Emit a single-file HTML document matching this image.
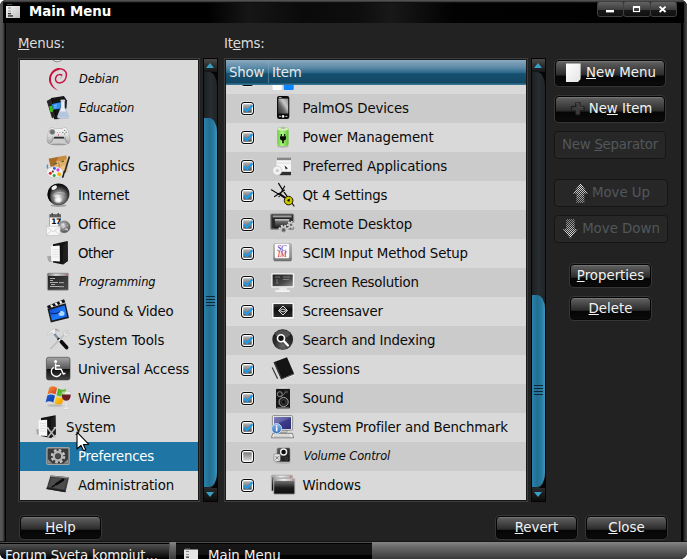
<!DOCTYPE html>
<html><head><meta charset="utf-8"><title>Main Menu</title>
<style>
html,body{margin:0;padding:0;background:#fff;}
body{width:687px;height:559px;position:relative;overflow:hidden;font-family:"DejaVu Sans","Liberation Sans",sans-serif;font-size:13.33px;letter-spacing:-0.21px;color:#e6e6e6;}
#win{position:absolute;left:0;top:0;width:687px;height:559px;background:#000;overflow:hidden;border-radius:6px 6px 7px 6px;}
#edge{position:absolute;left:0;top:0;width:687px;height:543px;box-sizing:border-box;border-radius:6px 6px 0 0;background:linear-gradient(90deg,#585858 0,#505050 2.5px,#303030 4px,#000 5.5px,#000 682.5px,#2c2c2c 684.5px,#484848 687px);}
#tbar{position:absolute;left:3px;top:0;width:681px;height:23px;background:linear-gradient(#565656 0,#4a4a4a 1.2px,#1a1a1a 2.2px,#000 3px,#000 100%);}
#tglow{position:absolute;left:3px;top:3px;width:681px;height:20px;background:linear-gradient(90deg,#000 0,#000 30%,#161616 36%,#0a0a0a 44%,#0d0d0d 52%,#181818 57%,#020202 66%,#000 100%);}
#body{position:absolute;left:6px;top:23px;width:675px;height:518px;background:#222;}
#title{position:absolute;left:29px;top:3px;font-weight:bold;font-size:13.33px;letter-spacing:0;color:#fff;line-height:18px;}
.wb{position:absolute;top:1px;height:16px;width:27px;box-sizing:border-box;border:1px solid #404040;border-radius:3px;background:linear-gradient(#626262 0,#3c3c3c 57%,#181818 60%,#101010 100%);}
.wb svg{position:absolute;left:-1px;top:0;}
.bi{display:inline-block;width:16px;height:20px;vertical-align:top;margin-right:4px;position:relative;}
.bi svg{position:absolute;left:0;top:0;overflow:visible;}
#cursor{position:absolute;left:74px;top:430px;}
.lbl{position:absolute;color:#dcdcdc;line-height:18px;}
.frame{position:absolute;background:#181818;box-sizing:border-box;border:1px solid #3c3c3c;}
.list{position:absolute;background:#d9d9d9;overflow:hidden;}
.row{position:absolute;left:0;width:100%;height:29px;line-height:29px;color:#0a0a0a;white-space:nowrap;}
.row.alt{background:#cbcbcb;}
.row.sel{background:#1f75a3;color:#fff;}
.row .tx{position:absolute;top:0;}
.row.sm .tx{font-size:11.45px;letter-spacing:-0.1px;font-style:oblique;margin-left:1px;}
.row .ic{position:absolute;top:2px;width:24px;height:24px;}
.row .ic svg{display:block;}
.cb{position:absolute;left:15px;top:8px;width:13px;height:13px;box-sizing:border-box;border:1px solid #0a0a0a;border-radius:3px;background:linear-gradient(#6c6c6c,#e4e4e4);box-shadow:inset 0 0 0 1.2px #fff,0 0 0 1px rgba(255,255,255,.35);}
.cb.on{background:linear-gradient(#c4c4c4,#444);}
.cb svg{position:absolute;left:-1px;top:-1px;}
#hdr{position:absolute;left:0;top:0;width:100%;height:25px;background:linear-gradient(#8aaabf 0%,#5d8aa6 30%,#2b6a8d 50%,#15506f 55%,#134865 90%,#3f7f9f 100%);color:#e8e8e8;line-height:26px;}
#hdr span{position:absolute;top:0;}
#hdr i{position:absolute;top:1px;width:1px;height:22px;background:rgba(140,180,205,.45);}
.btn{position:absolute;border-radius:4px;border:1px solid #050505;box-sizing:border-box;text-align:center;color:#f2f2f2;background:linear-gradient(#808080 0%,#5c5c5c 7%,#2a2a2a 59%,#050505 62%,#0b0b0b 100%);line-height:22px;white-space:nowrap;box-shadow:0 0 0 1px #363636;letter-spacing:0;}
.btn.big{line-height:23px;}
.btn.dis{background:#272727;border-color:#161616;color:#52575b;box-shadow:none;line-height:25px;}
u{text-decoration:underline;text-underline-offset:1px;}
.sb{position:absolute;width:15px;background:#050505;}
.sb .up,.sb .dn{position:absolute;left:1px;width:13px;height:13px;background:linear-gradient(#4a4a4a,#141414);}
.sb .up{top:1px}.sb .dn{bottom:1px;background:linear-gradient(#2a2a2a,#0c0c0c);}
.sb .up:after{content:"";position:absolute;left:2px;top:4px;border:4.5px solid transparent;border-top:0;border-bottom:5px solid #36a0c8;}
.sb .dn:after{content:"";position:absolute;left:2px;top:4px;border:4.5px solid transparent;border-bottom:0;border-top:5px solid #36a0c8;}
.sb .tr{position:absolute;left:1px;width:13px;top:14px;bottom:14px;border-radius:0 8px 8px 0/0 14px 14px 0;background:linear-gradient(90deg,#1b1f22,#272d31 50%,#1f2428);}
.sb .th{position:absolute;left:1px;width:13px;border-radius:0 8px 8px 0/0 14px 14px 0;background:linear-gradient(90deg,#2b82aa 0,#236e93 40%,#2a7ca2 75%,#3a98c0 100%);}
.sb .gr{position:absolute;left:3px;width:9px;height:10px;background:repeating-linear-gradient(#0d2736 0,#0d2736 1px,transparent 1px,transparent 3px);}
#panel{position:absolute;left:0;top:541px;width:687px;height:18px;background:linear-gradient(#151515 0,#151515 1px,#848484 1.2px,#6a6a6a 6px,#3a3a3a 18px);}
.tb{position:absolute;top:542px;height:18px;border-top:1px solid #4c4c4c;box-sizing:border-box;color:#f0f0f0;font-size:13.33px;letter-spacing:0;line-height:26px;white-space:nowrap;overflow:hidden;}
</style></head><body>
<div id="win">
<div id="edge"></div>
<div id="tbar"></div>
<div id="tglow"></div>
<div id="title">Main Menu</div>
<svg style="position:absolute;left:5px;top:3px" width="17" height="17" viewBox="0 0 17 17"><defs><linearGradient id="wi" x1="0" y1="0" x2="1" y2="1"><stop offset="0" stop-color="#f6f6f6"/><stop offset="1" stop-color="#bcbcbc"/></linearGradient></defs><rect x="2" y="1" width="5" height="1" fill="#4a4a4a"/><rect x="1" y="3" width="14" height="12" fill="url(#wi)"/><rect x="3" y="4.5" width="3" height="1" fill="#888"/><rect x="3" y="7.5" width="3" height="1" fill="#999"/><rect x="3" y="10" width="3" height="1.3" fill="#333"/><rect x="3" y="12.3" width="5" height="1.3" fill="#222"/></svg>
<div class="wb" style="left:597px;width:27px"><svg width="26" height="14"><rect x="9" y="8" width="8" height="2.4" fill="#fff"/></svg></div>
<div class="wb" style="left:623px;width:28px"><svg width="27" height="14"><rect x="10.5" y="5" width="6" height="4.5" fill="none" stroke="#fff" stroke-width="1.2"/><rect x="10" y="4" width="7" height="2" fill="#fff"/></svg></div>
<div class="wb" style="left:650px;width:27px"><svg width="26" height="14"><path d="M9.6 4.6 L15.6 10 M15.6 4.6 L9.6 10" stroke="#fff" stroke-width="1.9"/></svg></div>
<div id="body"></div>
<div class="lbl" style="left:18px;top:35px"><u>M</u>enus:</div>
<div class="lbl" style="left:224px;top:35px">It<u>e</u>ms:</div>
<div class="frame" style="left:18px;top:58px;width:182px;height:444px"></div>
<div class="frame" style="left:224px;top:58px;width:304px;height:444px"></div>

<div class="list" id="menus" style="left:20px;top:60px;width:178px;height:440px">
<div class="row" style="top:-24px"><span class="ic" style="left:14px"><svg width="26" height="26" viewBox="0 0 26 26" style="overflow:visible"><circle cx="23.3" cy="17.6" r="6.2" fill="#e4e4e4" stroke="#8c8c8c" stroke-width="1"/></svg></span><span class="tx" style="left:46px"></span></div>
<div class="row sm" style="top:5px"><span class="ic" style="left:26px"><svg width="26" height="26" viewBox="0 0 26 26" style="overflow:visible"><path d="M12.3 23.7 C7 21.6 2.6 17 3 12 C3.4 5.6 8.6 1.1 13 1.1 L13.5 2.9 C9.6 3 5.3 6.2 5 12 C4.7 16.4 8 20.8 12.3 23.7Z" fill="#c70f3d"/><path d="M11.5 2 C17 1 20.7 4.2 20.4 7.8 C20.2 11.3 18.4 15.6 13.8 16 C10.5 16 9.1 13.5 9.6 11.2 C10.1 8.8 11.6 7.7 13.2 7.6 C14.3 7.5 15.2 7.7 15.8 8" fill="none" stroke="#c70f3d" stroke-width="1.45" stroke-linecap="round"/><path d="M15.8 8 Q16 10.5 14 11.6" fill="none" stroke="#c70f3d" stroke-width=".7" opacity=".45"/></svg></span><span class="tx" style="left:58px">Debian</span></div>
<div class="row sm" style="top:34px"><span class="ic" style="left:26px"><svg width="26" height="26" viewBox="0 0 26 26" style="overflow:visible"><polygon points="5,2 17.9,0 21,4.5 20.5,12 14,23 8.2,23.3" fill="#151515"/><polygon points="0.7,5 4.6,2.8 9.6,21 6,22.3" fill="#262626"/><polygon points="4.6,2.8 5.6,2.4 10.6,20.6 9.6,21" fill="#0a0a0a"/>
<polygon points="3.1,10.4 6.2,9.6 7.2,15.4 4.4,16.2" fill="#3cc01a"/><polygon points="6,8 14.9,6.2 14.6,12.6 7,13.8" fill="#2c8ff2"/><path d="M8 9.6 l3 -.6 M8.3 11.4 l2.4 -.5" stroke="#9cd0ff" stroke-width=".8"/>
<path d="M15 4.6 L18.7 4.6 L18.7 11.2 L22.7 20.6 Q23 22.4 21 22.4 L13 22.4 Q11 22.4 11.4 20.6 L15 11.2 Z" fill="#e9eef5" stroke="#9aa6b8" stroke-width=".6"/><path d="M13.6 15.6 L20.6 15.6 L22.2 20.6 Q22.3 21.8 21 21.8 L13 21.8 Q11.8 21.8 12 20.6 Z" fill="#b4c6de"/><rect x="14.6" y="3.8" width="4.5" height="1.2" rx=".6" fill="#f4f6fa" stroke="#9aa6b8" stroke-width=".4"/></svg></span><span class="tx" style="left:58px;letter-spacing:-0.225px">Education</span></div>
<div class="row" style="top:63px"><span class="ic" style="left:26px"><svg width="26" height="26" viewBox="0 0 26 26" style="overflow:visible"><defs><linearGradient id="gp" x1="0" y1="0" x2="0" y2="1"><stop offset="0" stop-color="#f8f8f8"/><stop offset=".4" stop-color="#e6e6e6"/><stop offset="1" stop-color="#a4a4a4"/></linearGradient></defs><polygon points="7.4,13.5 18.6,13.5 20.4,18.8 4.6,18.8" fill="#b4b4b4" opacity=".3"/><ellipse cx="12.5" cy="19.3" rx="8.6" ry=".9" fill="#7c7c7c" opacity=".7"/>
<path d="M4.6 2.8 Q7 1.8 8.6 3.6 L16.4 3.6 Q18 1.8 20.4 2.8 Q23.4 6.5 24 14 Q24.2 18.8 21.8 18.7 Q20 18.4 18.6 13.5 L7.4 13.5 Q5.6 18.4 3.4 18.7 Q0.9 18.8 1.1 14 Q1.6 6.5 4.6 2.8 Z" fill="url(#gp)" stroke="#a0a0a0" stroke-width=".5"/>
<path d="M7.5 13.5 L18.5 13.5 L17.6 11.7 L8.4 11.7 Z" fill="#2a2a2a"/><path d="M7.4 13.5 Q5.8 18 3.8 18.5 Q6.5 15 6.6 11Z M18.6 13.5 Q20.2 18 22.2 18.5 Q19.5 15 19.4 11Z" fill="#8c8c8c" opacity=".6"/>
<circle cx="6.3" cy="6.9" r="2.7" fill="#7c7c7c" stroke="#9c9c9c" stroke-width=".5"/><circle cx="6.3" cy="6.9" r="1.5" fill="#686868"/><ellipse cx="12.4" cy="10" rx=".5" ry=".8" fill="#b82828"/><circle cx="18.6" cy="5.4" r=".7" fill="#888"/><circle cx="20.3" cy="7.2" r=".7" fill="#888"/><circle cx="16.8" cy="7.4" r=".7" fill="#777"/><circle cx="18.6" cy="9" r=".7" fill="#888"/><circle cx="11.4" cy="7.4" r=".5" fill="#999"/><circle cx="13.6" cy="7.4" r=".5" fill="#999"/></svg></span><span class="tx" style="left:58px">Games</span></div>
<div class="row" style="top:92px"><span class="ic" style="left:26px"><svg width="26" height="26" viewBox="0 0 26 26" style="overflow:visible"><polygon points="2.7,4.7 20.3,1.4 21.9,17.8 9,21" fill="#e2b06c"/><polygon points="2.7,4.7 13,2.8 10,8 7.5,13 4.5,12.5" fill="#a86c28"/><polygon points="13,2.8 20.3,1.4 20.6,5 15,7.5 11,6.5" fill="#c88c40"/><polygon points="15.5,12 21.6,11.5 21.9,17.8 14,19.5" fill="#edc48c"/>
<ellipse cx="9.4" cy="9.6" rx="1.8" ry="1" fill="#5a6a28" transform="rotate(-15 9.4 9.6)"/><ellipse cx="16.8" cy="7.4" rx="1.4" ry=".8" fill="#5a6a28" transform="rotate(-15 16.8 7.4)"/><path d="M12.5 8.5 Q14 12 13 14.5" stroke="#b07838" stroke-width=".8" fill="none"/><ellipse cx="14.6" cy="16.4" rx="1.4" ry=".6" fill="#8a3a20"/>
<path d="M1.6 10.5 Q0.6 13 2 14.5" stroke="#4a8ae0" stroke-width="1.4" fill="none"/>
<ellipse cx="8.7" cy="18.2" rx="8.3" ry="5.6" fill="#f1f1f1" stroke="#c4c4c4" stroke-width=".6"/>
<circle cx="4.3" cy="19.2" r="1.5" fill="#e02020"/><circle cx="8.2" cy="21.4" r="1.5" fill="#20b020"/><circle cx="13.2" cy="20.2" r="1.9" fill="#f0b010"/><circle cx="12" cy="15.9" r="1.6" fill="#d040e0"/><circle cx="8.4" cy="14.4" r="1.4" fill="#3050e0"/><circle cx="6.8" cy="17.4" r="1" fill="#3a2a20"/>
<line x1="23.4" y1="2.6" x2="18.6" y2="18.6" stroke="#2a2a2a" stroke-width="1.7"/><path d="M19.2 17.5 L17.6 23.2 Q16.4 24.4 15.8 23.2 Q17 21 17.6 17Z" fill="#151515"/></svg></span><span class="tx" style="left:58px;letter-spacing:-0.324px">Graphics</span></div>
<div class="row" style="top:121px"><span class="ic" style="left:26px"><svg width="26" height="26" viewBox="0 0 26 26" style="overflow:visible"><defs><radialGradient id="gl" cx=".52" cy=".62" r=".6"><stop offset="0" stop-color="#dcdcdc"/><stop offset=".4" stop-color="#8c8c8c"/><stop offset=".75" stop-color="#2e2e2e"/><stop offset="1" stop-color="#030303"/></radialGradient><radialGradient id="gl2"><stop offset="0" stop-color="#fff" stop-opacity="1"/><stop offset=".5" stop-color="#fff" stop-opacity=".8"/><stop offset="1" stop-color="#fff" stop-opacity="0"/></radialGradient></defs><ellipse cx="12.5" cy="22.6" rx="8" ry="1.4" fill="#8a8a8a" opacity=".7"/><circle cx="12.5" cy="11.3" r="10.9" fill="url(#gl)"/>
<path d="M2.2 8 A10.9 10.9 0 0 0 6 20 Q2.5 14 5.5 5 Q3 6.5 2.2 8Z" fill="#050505" opacity=".85"/>
<ellipse cx="8.2" cy="4.6" rx="3" ry="1.9" fill="#fff" opacity=".95" transform="rotate(-28 8.2 4.6)"/><ellipse cx="12.2" cy="17" rx="4.6" ry="3.6" fill="url(#gl2)"/><ellipse cx="11" cy="13" rx="4" ry="2" fill="url(#gl2)" opacity=".7"/><path d="M6.5 12.5 Q12 7.5 19 10.5" stroke="#e8e8e8" stroke-width=".8" fill="none" opacity=".5"/></svg></span><span class="tx" style="left:58px">Internet</span></div>
<div class="row" style="top:150px"><span class="ic" style="left:26px"><svg width="26" height="26" viewBox="0 0 26 26" style="overflow:visible"><defs><radialGradient id="og" cx=".4" cy=".35" r=".7"><stop offset="0" stop-color="#c8c8c8"/><stop offset="1" stop-color="#4a4a4a"/></radialGradient></defs><rect x="3.7" y="2.4" width="11" height="13" fill="#f6f6f6" stroke="#8a8a8a" stroke-width=".6"/><rect x="3.7" y="2.4" width="11" height="3" fill="#4a4a4a"/><rect x="5.6" y="1" width="1.2" height="2.6" fill="#3a3a3a"/><rect x="11.6" y="1" width="1.2" height="2.6" fill="#3a3a3a"/><path d="M5 4h8.5" stroke="#aaa" stroke-width=".7" stroke-dasharray="1 .6"/>
<text x="5.2" y="12.2" font-family="DejaVu Sans" font-weight="bold" font-size="7.6" letter-spacing="-.5" fill="#0a0a0a">17</text>
<circle cx="18.2" cy="14.9" r="5.9" fill="url(#og)" stroke="#5a5a5a" stroke-width=".5"/><path d="M15 12 q2.6 -2 3.6 .6 q1.6 1.8 -.8 3.6 q-2.6 0 -2.8 -4.2z M19.6 16.6 q2.6 -1 2.6 1.6 q-1.6 1.8 -2.6 -1.6z" fill="#d4d4d4" opacity=".75"/><circle cx="17.4" cy="12.2" r=".5" fill="#fff"/><circle cx="19.4" cy="17.2" r=".5" fill="#fff"/><circle cx="21.6" cy="13.4" r=".4" fill="#fff"/>
<rect x="0.3" y="14.2" width="13.8" height="9.2" fill="#f7f7f7" stroke="#bdbdbd" stroke-width=".6"/><path d="M0.3 14.2 L7.2 19.8 L14.1 14.2 M0.3 23.4 L5.6 18.4 M14.1 23.4 L8.8 18.4" stroke="#c8c8c8" stroke-width=".7" fill="none"/></svg></span><span class="tx" style="left:58px">Office</span></div>
<div class="row" style="top:179px"><span class="ic" style="left:26px"><svg width="26" height="26" viewBox="0 0 26 26" style="overflow:visible"><polygon points="1,15.5 6,14.5 6,21 2.5,20.5" fill="#9a9a9a" opacity=".8"/><polygon points="7,3.2 21.6,0 21.8,20 17,23.4 7,21.5" fill="#121212"/><polygon points="17,4.5 21.6,0 21.8,20 17,23.4" fill="#1e1e1e"/>
<polygon points="5,5.2 13.7,4.6 13.9,20.5 5.2,20" fill="#f8f8f8"/><path d="M6.5 8.5h6M6.5 11h6M6.5 13.5h6M6.5 16h6" stroke="#dcdcdc" stroke-width=".8"/></svg></span><span class="tx" style="left:58px;letter-spacing:-0.510px">Other</span></div>
<div class="row sm" style="top:208px"><span class="ic" style="left:26px"><svg width="26" height="26" viewBox="0 0 26 26" style="overflow:visible"><defs><linearGradient id="tg" x1="0" y1="0" x2="1" y2="1"><stop offset="0" stop-color="#1e1e1e"/><stop offset="1" stop-color="#4a4a4a"/></linearGradient><linearGradient id="tt" x1="0" y1="0" x2="1" y2="0"><stop offset="0" stop-color="#777"/><stop offset=".4" stop-color="#ddd"/><stop offset="1" stop-color="#888"/></linearGradient></defs><rect x="1.3" y="3.2" width="21.2" height="17.1" rx="1" fill="url(#tg)" stroke="#a8a8a8" stroke-width="1"/><rect x="1.8" y="3.7" width="20.2" height="2.2" fill="url(#tt)"/><circle cx="20.3" cy="4.7" r=".6" fill="#e05050"/>
<path d="M4 8.5h5M4 10.5h3M4 12.5h8M5 14.5h4M4 16.5h9M13 12.7h5M13 16.7h5" stroke="#bdbdbd" stroke-width=".9"/></svg></span><span class="tx" style="left:58px">Programming</span></div>
<div class="row" style="top:237px"><span class="ic" style="left:26px"><svg width="26" height="26" viewBox="0 0 26 26" style="overflow:visible"><defs><linearGradient id="sv" x1="0" y1="0" x2="1" y2="1"><stop offset="0" stop-color="#0a3fc0"/><stop offset=".6" stop-color="#1e7cff"/><stop offset="1" stop-color="#0a50d0"/></linearGradient></defs><polygon points="1,7 18,0.3 19.4,3.3 2,9.8" fill="#111"/><path d="M4 6 l2 -0.8 l1.6 2.6 l-2 .8z M8.5 4.2 l2 -.8 l1.6 2.6 l-2 .8z M13 2.4 l2 -.8 l1.6 2.6 l-2 .8z" fill="#f4f4f4"/>
<polygon points="1.5,9.8 19.6,4.2 23,19 4.8,23.4" fill="#1a1a1a"/><polygon points="3.3,11 18.6,6.3 21.2,17.8 5.8,21.5" fill="url(#sv)"/><ellipse cx="15.5" cy="14.5" rx="3" ry="2.5" fill="#bfe4ff" opacity=".9"/><path d="M4.5 14 Q10 16 14 12.5" stroke="#082a80" stroke-width="1.2" fill="none"/></svg></span><span class="tx" style="left:58px">Sound &amp; Video</span></div>
<div class="row" style="top:266px"><span class="ic" style="left:26px"><svg width="26" height="26" viewBox="0 0 26 26" style="overflow:visible"><path d="M18.6 7.4 L5.6 20.8 Q4.4 21.8 4.2 20.6 L17.2 6.4Z" fill="#c6c6c6" stroke="#b0b0b0" stroke-width=".4"/><path d="M22.4 2.6 Q20 1.2 18.2 3.4 Q16.8 5.4 17.8 7.6 Q20.2 9 22.4 7.4 Q23.6 6 23 4.4 L20.8 6.2 L19.2 4.8 Z" fill="#e6e6e6" stroke="#b4b4b4" stroke-width=".5"/>
<path d="M1.2 6.2 Q3.6 2 8.4 0.6 Q11.6 0.4 13.6 3.2 Q11.2 2.2 9.6 3 L10 5.4 L8 7 L5.6 4.6 Q3.4 5.2 2.4 7.2Z" fill="#ececec" stroke="#b0b0b0" stroke-width=".5"/><path d="M8.6 1 Q11.6 0.6 13.6 3.2 Q11.4 2.2 9.8 2.8Z" fill="#9c9c9c"/>
<line x1="8.4" y1="6" x2="12.2" y2="10.6" stroke="#7c8c9a" stroke-width="2.2"/><line x1="11.9" y1="10.4" x2="12.9" y2="11.5" stroke="#151515" stroke-width="2.6"/><line x1="12.8" y1="11.4" x2="14.8" y2="13.2" stroke="#f4f4f4" stroke-width="1.4"/><line x1="15.4" y1="13.8" x2="20.6" y2="19.6" stroke="#0c0c0c" stroke-width="3.7" stroke-linecap="round"/></svg></span><span class="tx" style="left:58px;letter-spacing:-0.028px">System Tools</span></div>
<div class="row" style="top:295px"><span class="ic" style="left:26px"><svg width="26" height="26" viewBox="0 0 26 26" style="overflow:visible"><defs><linearGradient id="ua" x1="0" y1="0" x2="0" y2="1"><stop offset="0" stop-color="#a6a6a6"/><stop offset=".5" stop-color="#585858"/><stop offset=".52" stop-color="#0c0c0c"/><stop offset="1" stop-color="#444"/></linearGradient></defs><rect x="0.4" y="0.3" width="23.6" height="22.6" rx="2.2" fill="url(#ua)" stroke="#3a3a3a" stroke-width=".6"/>
<circle cx="9.6" cy="4.6" r="1.5" fill="#fff"/><path d="M9.6 6.5 L9.6 12.3 L15.2 12.3 L17.3 17 L19.4 16.2 M9.8 8.8 L14 8.8" fill="none" stroke="#fff" stroke-width="1.5" stroke-linejoin="round"/><path d="M7.7 10.2 A5 5 0 1 0 15 16.2" fill="none" stroke="#fff" stroke-width="1.3"/></svg></span><span class="tx" style="left:58px;letter-spacing:-0.057px">Universal Access</span></div>
<div class="row" style="top:324px"><span class="ic" style="left:26px"><svg width="26" height="26" viewBox="0 0 26 26" style="overflow:visible"><defs><linearGradient id="w1" x1="0" y1="0" x2="1" y2="1"><stop offset="0" stop-color="#f0a040"/><stop offset="1" stop-color="#d83010"/></linearGradient><linearGradient id="w2" x1="0" y1="0" x2="1" y2="1"><stop offset="0" stop-color="#30a020"/><stop offset="1" stop-color="#8ad040"/></linearGradient><linearGradient id="w3" x1="0" y1="0" x2="1" y2="1"><stop offset="0" stop-color="#2060e0"/><stop offset="1" stop-color="#0a3aa0"/></linearGradient><linearGradient id="w4" x1="0" y1="0" x2="1" y2="1"><stop offset="0" stop-color="#ffd820"/><stop offset="1" stop-color="#f09000"/></linearGradient></defs><ellipse cx="9" cy="19.5" rx="8" ry="1.3" fill="#9c9c9c" opacity=".5"/>
<path d="M3.2 1.5 Q7 -1 11.2 2 L9.4 8.6 Q5.5 6 1.6 8.3Z" fill="url(#w1)"/><path d="M12.3 2.6 Q16 5 20.3 2.8 L18.4 9.4 Q14.5 11.6 10.5 9.2Z" fill="url(#w2)"/>
<path d="M1.3 9.6 Q5 7.2 9 9.8 L7.2 16.6 Q3.5 14 -0.4 16.4Z" fill="url(#w3)"/><path d="M10.2 10.5 Q14 12.8 18 10.7 L16.2 17.4 Q12.4 19.6 8.4 17.2Z" fill="url(#w4)"/>
<ellipse cx="20.2" cy="22.2" rx="3.6" ry="1.1" fill="#f4f4f4" stroke="#b8b8b8" stroke-width=".5"/><line x1="20.2" y1="14" x2="20.2" y2="22" stroke="#e6e6e6" stroke-width="1.2"/>
<path d="M16 5.5 L24.4 5.5 Q25.5 14.5 20.2 14.8 Q15 14.5 16 5.5Z" fill="#fff" opacity=".5" stroke="#bbb" stroke-width=".5"/><path d="M16 8.5 L24.6 8.5 Q25 14.5 20.2 14.7 Q15.4 14.5 16 8.5Z" fill="#5e0a12" opacity=".92"/></svg></span><span class="tx" style="left:58px">Wine</span></div>
<div class="row" style="top:353px"><span class="ic" style="left:14px"><svg width="26" height="26" viewBox="0 0 26 26" style="overflow:visible"><polygon points="2,14.5 6,13.5 6,20 3,19.5" fill="#9a9a9a" opacity=".8"/><polygon points="7,3 21.4,0.3 21.7,19.5 17,22.9 7,21" fill="#121212"/><polygon points="17,4.5 21.4,0.3 21.7,19.5 17,22.9" fill="#1e1e1e"/>
<polygon points="4.6,5.2 13.1,4.7 13.3,21 4.8,20.5" fill="#f8f8f8"/><path d="M6 8.5h6M6 11h6M6 13.5h6M6 16h6" stroke="#dcdcdc" stroke-width=".8"/>
<path d="M13.5 13 L21 22 M21.5 12.5 L14 22" stroke="#b8b8b8" stroke-width="1.5" stroke-linecap="round"/><path d="M12.8 12.2 l2.4 .6 l-.8 2z M22 12 l-2.6 .4 l1.2 2z" fill="#d8d8d8"/></svg></span><span class="tx" style="left:46px;letter-spacing:-0.010px">System</span></div>
<div class="row sel" style="top:382px"><span class="ic" style="left:26px"><svg width="26" height="26" viewBox="0 0 26 26" style="overflow:visible"><rect x="0.9" y="3.8" width="22.2" height="16.6" rx="1" fill="#3a3a3a" stroke="#a4a4a4" stroke-width="1.4"/>
<polygon points="1.8,19.6 1.8,15 6.5,19.6" fill="#8c8c8c"/><polygon points="22.2,19.6 22.2,15 17.5,19.6" fill="#8c8c8c"/>
<circle cx="12" cy="12.2" r="6" fill="none" stroke="#c4c4c4" stroke-width="2.6" stroke-dasharray="2.6 2.1"/><circle cx="12" cy="12.2" r="4.2" fill="none" stroke="#b4b4b4" stroke-width="2.4"/><circle cx="12" cy="12.2" r="2.2" fill="#4a4a4a"/></svg></span><span class="tx" style="left:58px">Preferences</span></div>
<div class="row" style="top:411px"><span class="ic" style="left:26px"><svg width="26" height="26" viewBox="0 0 26 26" style="overflow:visible"><polygon points="4.5,2.4 23,4.2 19.5,19.3 0.4,16" fill="#3c3c3c"/><polygon points="4.5,2.4 23,4.2 22.6,5.6 4.6,3.8" fill="#8a8a8a"/><polygon points="0.4,16 19.5,19.3 19.2,17.6 0.8,14.4" fill="#1c1c1c"/>
<polygon points="5.5,4.8 21,6.3 18.3,16.5 2.5,13.8" fill="#4c4c4c"/><line x1="5.5" y1="14.2" x2="11" y2="10.6" stroke="#0a0a0a" stroke-width="1.3"/><line x1="10.5" y1="11" x2="17" y2="6.8" stroke="#0a0a0a" stroke-width="2.6" stroke-linecap="round"/></svg></span><span class="tx" style="left:58px;letter-spacing:-0.102px">Administration</span></div>
</div>
<div class="list" id="items" style="left:226px;top:60px;width:300px;height:440px">
<div class="row" style="top:5px"><span class="cb on"><svg width="13" height="13" viewBox="0 0 13 13"><path d="M3 6.5 L5.8 9.2 L11.5 3.2" fill="none" stroke="#1e9be8" stroke-width="2.2"/></svg></span><span class="ic" style="left:44px"><svg width="26" height="26" viewBox="0 0 26 26" style="overflow:visible"><rect x="2.5" y="10" width="9.3" height="13" rx="1" fill="#fdfdfd"/><rect x="13.8" y="10" width="9.9" height="13" rx="1" fill="#0a84ff"/></svg></span><span class="tx" style="left:76.60000000000002px"></span></div>
<div class="row alt" style="top:34px"><span class="cb on"><svg width="13" height="13" viewBox="0 0 13 13"><path d="M3 6.5 L5.8 9.2 L11.5 3.2" fill="none" stroke="#1e9be8" stroke-width="2.2"/></svg></span><span class="ic" style="left:44px"><svg width="26" height="26" viewBox="0 0 26 26" style="overflow:visible"><defs><linearGradient id="pg" x1="1" y1="0" x2="0" y2="1"><stop offset="0" stop-color="#8a8a8a"/><stop offset=".35" stop-color="#c8c8c8"/><stop offset=".6" stop-color="#6a6a6a"/><stop offset="1" stop-color="#2c2c2c"/></linearGradient></defs><rect x="7" y="0" width="12.3" height="23" rx="2.2" fill="#0c0c0c"/><rect x="8.2" y="2.6" width="10" height="15" fill="url(#pg)"/><rect x="9" y="1" width="2.5" height=".8" fill="#ddd"/><circle cx="13.1" cy="20.4" r="1.3" fill="#e8e8e8"/><rect x="9" y="19.8" width="2" height="1.2" fill="#aaa"/><rect x="15.4" y="19.8" width="2" height="1.2" fill="#aaa"/></svg></span><span class="tx" style="left:76.60000000000002px;letter-spacing:-0.118px">PalmOS Devices</span></div>
<div class="row" style="top:63px"><span class="cb on"><svg width="13" height="13" viewBox="0 0 13 13"><path d="M3 6.5 L5.8 9.2 L11.5 3.2" fill="none" stroke="#1e9be8" stroke-width="2.2"/></svg></span><span class="ic" style="left:44px"><svg width="26" height="26" viewBox="0 0 26 26" style="overflow:visible"><defs><linearGradient id="bt" x1="0" y1="0" x2="1" y2="0"><stop offset="0" stop-color="#62cc38"/><stop offset=".4" stop-color="#b4f58a"/><stop offset="1" stop-color="#5cc432"/></linearGradient></defs><ellipse cx="13" cy="21.5" rx="6" ry="1.2" fill="#9a9a9a" opacity=".6"/><rect x="7.3" y="3.6" width="11.3" height="17.4" rx="2.6" fill="url(#bt)"/><ellipse cx="13" cy="4" rx="5.6" ry="1.9" fill="#d7f5b8" stroke="#9acb78" stroke-width=".5"/><ellipse cx="13" cy="3" rx="2.6" ry="1" fill="#b4b4b4"/>
<path d="M11.3 9 v2.3 M14.7 9 v2.3" stroke="#0a0a0a" stroke-width="1.1"/><path d="M10 11.2 h6 v2 q0 2.2 -2.2 2.4 v2.6 h-1.6 v-2.6 q-2.2 -.2 -2.2 -2.4z" fill="#0a0a0a"/></svg></span><span class="tx" style="left:76.60000000000002px;letter-spacing:-0.083px">Power Management</span></div>
<div class="row alt" style="top:92px"><span class="cb on"><svg width="13" height="13" viewBox="0 0 13 13"><path d="M3 6.5 L5.8 9.2 L11.5 3.2" fill="none" stroke="#1e9be8" stroke-width="2.2"/></svg></span><span class="ic" style="left:44px"><svg width="26" height="26" viewBox="0 0 26 26" style="overflow:visible"><rect x="7" y="3.7" width="14" height="2.6" fill="#858585"/><rect x="6.5" y="6.3" width="14.5" height="13" fill="#f6f6f6"/><rect x="7" y="8.6" width="14" height=".8" fill="#d4d4d4"/><rect x="9.5" y="17.8" width="11.5" height="3.4" fill="#2e2e2e"/><path d="M14.5 11.5 l3.5 3 l-1.6 .2 l-.4 1.4z" fill="#1a1a1a"/>
<circle cx="7.3" cy="16.6" r="4.6" fill="#f2f2f2" stroke="#c0c0c0" stroke-width=".6"/><circle cx="7.3" cy="16.6" r="1.6" fill="#c9c9c9"/></svg></span><span class="tx" style="left:76.60000000000002px;letter-spacing:-0.100px">Preferred Applications</span></div>
<div class="row" style="top:121px"><span class="cb on"><svg width="13" height="13" viewBox="0 0 13 13"><path d="M3 6.5 L5.8 9.2 L11.5 3.2" fill="none" stroke="#1e9be8" stroke-width="2.2"/></svg></span><span class="ic" style="left:44px"><svg width="26" height="26" viewBox="0 0 26 26" style="overflow:visible"><path d="M8.6 0.4 Q13 8 24 23 M1.4 6.8 Q10 12 18.5 17.5 M14.6 3.2 L9 13.6 M4.6 13.6 L14.4 7.2 M11 11.5 L17 15.5" stroke="#0c0c0c" stroke-width="1.2" fill="none" stroke-linecap="round"/>
<circle cx="18.6" cy="17.6" r="4.3" fill="#c9c400" stroke="#1a1a00" stroke-width="1"/><path d="M16.8 17.2 L20 15.6 L19.4 19Z" fill="#0c0c0c"/></svg></span><span class="tx" style="left:76.60000000000002px">Qt 4 Settings</span></div>
<div class="row alt" style="top:150px"><span class="cb on"><svg width="13" height="13" viewBox="0 0 13 13"><path d="M3 6.5 L5.8 9.2 L11.5 3.2" fill="none" stroke="#1e9be8" stroke-width="2.2"/></svg></span><span class="ic" style="left:44px"><svg width="26" height="26" viewBox="0 0 26 26" style="overflow:visible"><defs><linearGradient id="rd" x1="0" y1="0" x2="0" y2="1"><stop offset="0" stop-color="#888"/><stop offset="1" stop-color="#1c1c1c"/></linearGradient></defs><rect x="0.8" y="2" width="22.8" height="15.2" rx="1" fill="#2a2a2a" stroke="#858585" stroke-width="1.2"/><rect x="2.6" y="3.4" width="19" height="2" fill="#9c9c9c"/><rect x="4.8" y="7" width="14.5" height="9" fill="url(#rd)" stroke="#111" stroke-width=".5"/><rect x="4.8" y="7" width="14.5" height="1.6" fill="#bbb"/>
<circle cx="13.6" cy="18" r="4.3" fill="none" stroke="#d4d4d4" stroke-width="2.2" stroke-dasharray="2 1.4"/><circle cx="13.6" cy="18" r="3" fill="#8a8a8a" stroke="#c8c8c8" stroke-width="1.6"/><circle cx="13.6" cy="18" r="1.3" fill="#555"/>
<circle cx="21" cy="12.8" r="3.2" fill="none" stroke="#dcdcdc" stroke-width="1.8" stroke-dasharray="1.7 1.2"/><circle cx="21" cy="12.8" r="2.2" fill="#9a9a9a" stroke="#d0d0d0" stroke-width="1.3"/><circle cx="21" cy="12.8" r=".9" fill="#555"/></svg></span><span class="tx" style="left:76.60000000000002px;letter-spacing:-0.072px">Remote Desktop</span></div>
<div class="row" style="top:179px"><span class="cb on"><svg width="13" height="13" viewBox="0 0 13 13"><path d="M3 6.5 L5.8 9.2 L11.5 3.2" fill="none" stroke="#1e9be8" stroke-width="2.2"/></svg></span><span class="ic" style="left:44px"><svg width="26" height="26" viewBox="0 0 26 26" style="overflow:visible"><defs><linearGradient id="kc" x1="0" y1="0" x2="0" y2="1"><stop offset="0" stop-color="#b4b4b4"/><stop offset=".75" stop-color="#909090"/><stop offset="1" stop-color="#6a6a6a"/></linearGradient></defs><rect x="3.2" y="2" width="18.8" height="18.3" rx="2.6" fill="url(#kc)"/><rect x="4.8" y="2.8" width="14.4" height="14.4" rx="1.2" fill="#fbfbfb"/>
<text x="7.2" y="9.8" font-family="Liberation Serif, DejaVu Serif, serif" font-style="italic" font-size="8" fill="#5a2aa8">SC</text><text x="7.6" y="16.4" font-family="Liberation Serif, DejaVu Serif, serif" font-style="italic" font-size="8" fill="#b82050">IM</text></svg></span><span class="tx" style="left:76.60000000000002px;letter-spacing:-0.174px">SCIM Input Method Setup</span></div>
<div class="row alt" style="top:208px"><span class="cb on"><svg width="13" height="13" viewBox="0 0 13 13"><path d="M3 6.5 L5.8 9.2 L11.5 3.2" fill="none" stroke="#1e9be8" stroke-width="2.2"/></svg></span><span class="ic" style="left:44px"><svg width="26" height="26" viewBox="0 0 26 26" style="overflow:visible"><defs><linearGradient id="sr" x1="0" y1="0" x2="1" y2="1"><stop offset="0" stop-color="#1e1e1e"/><stop offset=".6" stop-color="#484848"/><stop offset="1" stop-color="#8c8c8c"/></linearGradient></defs><rect x="1.3" y="3.2" width="22.8" height="14.3" rx="1" fill="#f6f6f6"/><rect x="2.6" y="4.5" width="20.2" height="11.7" fill="url(#sr)"/><path d="M5 7h5M13 7h7M7 9v5M13 9.5h6" stroke="#999" stroke-width=".7"/>
<polygon points="10,17.5 16,17.5 17.5,20.5 8.5,20.5" fill="#e9e9e9"/><rect x="5" y="20.3" width="15" height="1.6" rx=".8" fill="#f4f4f4"/></svg></span><span class="tx" style="left:76.60000000000002px">Screen Resolution</span></div>
<div class="row" style="top:237px"><span class="cb on"><svg width="13" height="13" viewBox="0 0 13 13"><path d="M3 6.5 L5.8 9.2 L11.5 3.2" fill="none" stroke="#1e9be8" stroke-width="2.2"/></svg></span><span class="ic" style="left:44px"><svg width="26" height="26" viewBox="0 0 26 26" style="overflow:visible"><defs><linearGradient id="ss" x1="0" y1="0" x2="0" y2="1"><stop offset="0" stop-color="#3c3c3c"/><stop offset=".4" stop-color="#0c0c0c"/><stop offset="1" stop-color="#2a2a2a"/></linearGradient></defs><rect x="1.5" y="3.2" width="23.1" height="17.1" rx="1.8" fill="#f4f4f4" stroke="#bdbdbd" stroke-width=".5"/><rect x="3.5" y="5" width="19" height="13" fill="url(#ss)"/>
<path d="M13 7 L17.5 11.5 L13 16 L8.5 11.5Z M9.5 11.5 Q13 8.5 16.5 11.5 Q13 14.5 9.5 11.5Z" fill="none" stroke="#f0f0f0" stroke-width=".9"/></svg></span><span class="tx" style="left:76.60000000000002px">Screensaver</span></div>
<div class="row alt" style="top:266px"><span class="cb on"><svg width="13" height="13" viewBox="0 0 13 13"><path d="M3 6.5 L5.8 9.2 L11.5 3.2" fill="none" stroke="#1e9be8" stroke-width="2.2"/></svg></span><span class="ic" style="left:44px"><svg width="26" height="26" viewBox="0 0 26 26" style="overflow:visible"><defs><radialGradient id="sc" cx=".5" cy=".8" r=".8"><stop offset="0" stop-color="#6a6a6a"/><stop offset=".5" stop-color="#2a2a2a"/><stop offset="1" stop-color="#1a1a1a"/></radialGradient></defs><circle cx="12.7" cy="11.6" r="10.4" fill="url(#sc)"/><ellipse cx="12.7" cy="6" rx="7.5" ry="4" fill="#fff" opacity=".22"/><circle cx="11" cy="10.2" r="3.5" fill="#0c0c0c" stroke="#fff" stroke-width="1.6"/><line x1="13.8" y1="13" x2="18" y2="17.4" stroke="#fff" stroke-width="2.2" stroke-linecap="round"/></svg></span><span class="tx" style="left:76.60000000000002px">Search and Indexing</span></div>
<div class="row" style="top:295px"><span class="cb on"><svg width="13" height="13" viewBox="0 0 13 13"><path d="M3 6.5 L5.8 9.2 L11.5 3.2" fill="none" stroke="#1e9be8" stroke-width="2.2"/></svg></span><span class="ic" style="left:44px"><svg width="26" height="26" viewBox="0 0 26 26" style="overflow:visible"><polygon points="5,7.5 12.5,22.6 24.2,18.4 23.6,16.6" fill="#f2f2f2"/><polygon points="3.6,5.2 17,0.2 24,16.6 11,22" fill="#141414"/><polygon points="3.6,5.2 4.8,4.8 12,21.6 11,22" fill="#3c3c3c"/><path d="M11.2 22.2 L24 17" stroke="#222" stroke-width=".8"/>
<line x1="2.2" y1="10.5" x2="7.6" y2="21.8" stroke="#3a3a3a" stroke-width="1.2"/></svg></span><span class="tx" style="left:76.60000000000002px;letter-spacing:-0.067px">Sessions</span></div>
<div class="row alt" style="top:324px"><span class="cb on"><svg width="13" height="13" viewBox="0 0 13 13"><path d="M3 6.5 L5.8 9.2 L11.5 3.2" fill="none" stroke="#1e9be8" stroke-width="2.2"/></svg></span><span class="ic" style="left:44px"><svg width="26" height="26" viewBox="0 0 26 26" style="overflow:visible"><ellipse cx="13" cy="3" rx="6" ry="1.6" fill="#f4f4f4"/><rect x="6" y="2.8" width="14" height="19.6" rx="1" fill="#161616"/><rect x="7" y="21.4" width="12" height="1.2" fill="#8a8a8a"/>
<circle cx="9.8" cy="8.2" r="2.5" fill="#1c1c1c" stroke="#9c9c9c" stroke-width=".9"/><rect x="14.6" y="4.6" width="3.6" height="2.6" fill="#3c3c3c"/><circle cx="13.6" cy="16" r="4.6" fill="#222" stroke="#b0b0b0" stroke-width=".9"/><circle cx="13.6" cy="16" r="2.2" fill="#0c0c0c" stroke="#555" stroke-width=".6"/><path d="M11 10.5 Q14 9 15.5 6" stroke="#888" stroke-width=".7" fill="none"/></svg></span><span class="tx" style="left:76.60000000000002px">Sound</span></div>
<div class="row" style="top:353px"><span class="cb on"><svg width="13" height="13" viewBox="0 0 13 13"><path d="M3 6.5 L5.8 9.2 L11.5 3.2" fill="none" stroke="#1e9be8" stroke-width="2.2"/></svg></span><span class="ic" style="left:44px"><svg width="26" height="26" viewBox="0 0 26 26" style="overflow:visible"><defs><linearGradient id="pf" x1="0" y1="0" x2="1" y2="1"><stop offset="0" stop-color="#6c6cb4"/><stop offset=".5" stop-color="#3c3c8c"/><stop offset="1" stop-color="#2c2c74"/></linearGradient><linearGradient id="pi" x1="0" y1="0" x2="0" y2="1"><stop offset="0" stop-color="#8cb8e8"/><stop offset="1" stop-color="#2c6cbc"/></linearGradient></defs><rect x="2.4" y="0.6" width="20.2" height="14.6" rx="1" fill="#e9e9e6" stroke="#6c6c6c" stroke-width=".7"/><rect x="4" y="2" width="17" height="12" fill="url(#pf)"/><path d="M4 10 L21 3 L21 2 L4 2Z" fill="#fff" opacity=".14"/>
<rect x="9" y="15.4" width="8" height="2" fill="#c9c9c9" stroke="#777" stroke-width=".5"/><path d="M2.8 18.4 L22.4 18.4 L23.6 22.8 L1.4 22.8Z" fill="#f0f0ee" stroke="#5a5a5a" stroke-width=".7"/><path d="M4 20h16M3.6 21.4h17" stroke="#b0b0b0" stroke-width=".6"/>
<circle cx="6.6" cy="13.6" r="5" fill="url(#pi)" stroke="#d4e4f4" stroke-width=".9"/><circle cx="6.6" cy="10.9" r=".9" fill="#fff"/><rect x="5.8" y="12.4" width="1.7" height="4" fill="#fff"/></svg></span><span class="tx" style="left:76.60000000000002px;letter-spacing:-0.174px">System Profiler and Benchmark</span></div>
<div class="row sm alt" style="top:382px"><span class="cb"></span><span class="ic" style="left:44px"><svg width="26" height="26" viewBox="0 0 26 26" style="overflow:visible"><defs><linearGradient id="vl" x1="0" y1="0" x2="1" y2="1"><stop offset="0" stop-color="#6c6c6c"/><stop offset=".5" stop-color="#2c2c2c"/><stop offset="1" stop-color="#111"/></linearGradient></defs><ellipse cx="13" cy="18.6" rx="8" ry="1" fill="#8f8f8f" opacity=".6"/><rect x="6.6" y="3.6" width="13.6" height="14.4" rx="1.6" fill="url(#vl)" stroke="#d4d4d4" stroke-width=".6"/><circle cx="13.6" cy="8" r="3" fill="#0c0c0c" stroke="#f0f0f0" stroke-width="1.4"/><circle cx="16.5" cy="14.8" r="1.4" fill="#111" stroke="#777" stroke-width=".5"/>
<rect x="4" y="10" width="6.2" height="7.2" rx="1" fill="#e9e9e9" stroke="#777" stroke-width=".6"/><path d="M5.4 15.6 l3.4 -3.6 M5.6 12.2 l3 3.2" stroke="#555" stroke-width=".8"/></svg></span><span class="tx" style="left:76.60000000000002px">Volume Control</span></div>
<div class="row" style="top:411px"><span class="cb on"><svg width="13" height="13" viewBox="0 0 13 13"><path d="M3 6.5 L5.8 9.2 L11.5 3.2" fill="none" stroke="#1e9be8" stroke-width="2.2"/></svg></span><span class="ic" style="left:44px"><svg width="26" height="26" viewBox="0 0 26 26" style="overflow:visible"><defs><linearGradient id="wn" x1="0" y1="0" x2="0" y2="1"><stop offset="0" stop-color="#8a8a8a"/><stop offset=".2" stop-color="#6a6a6a"/><stop offset=".6" stop-color="#1c1c1c"/><stop offset="1" stop-color="#0c0c0c"/></linearGradient><linearGradient id="wt" x1="0" y1="0" x2="1" y2="0"><stop offset="0" stop-color="#999"/><stop offset=".45" stop-color="#f0f0f0"/><stop offset="1" stop-color="#aaa"/></linearGradient></defs><rect x="1.4" y="2.2" width="21.2" height="15.8" rx=".8" fill="url(#wn)" stroke="#b4b4b4" stroke-width=".9"/><rect x="1.9" y="2.7" width="20.2" height="2" fill="url(#wt)"/><circle cx="20.4" cy="3.6" r=".6" fill="#e05050"/>
<rect x="3.7" y="5.4" width="21.2" height="15.8" rx=".8" fill="url(#wn)" stroke="#c0c0c0" stroke-width=".9"/><rect x="4.2" y="5.9" width="20.2" height="2" fill="url(#wt)"/><circle cx="22.8" cy="6.8" r=".6" fill="#e05050"/></svg></span><span class="tx" style="left:76.60000000000002px">Windows</span></div>
<div id="hdr"><span style="left:3px">Show</span><i style="left:42px"></i><span style="left:46px">Item</span></div>
</div>
<div class="sb" style="left:203px;top:58px;height:444px"><div class="up"></div><div class="tr"></div><div class="th" style="top:60px;height:369px"></div><div class="gr" style="top:238px"></div><div class="dn"></div></div>
<div class="sb" style="left:531px;top:58px;height:444px"><div class="up"></div><div class="tr"></div><div class="th" style="top:237px;height:192px"></div><div class="gr" style="top:327px"></div><div class="dn"></div></div>
<div class="btn big" style="left:555px;top:60px;width:110px;height:26px;padding-left:1px"><span class="bi" style="margin-right:5px"><svg width="16" height="20"><defs><linearGradient id="nm" x1="0" y1="0" x2="1" y2="1"><stop offset="0" stop-color="#fff"/><stop offset="1" stop-color="#e4e4e4"/></linearGradient></defs><path d="M1 3 H15.6 V18.5 L13 21.5 H1Z" fill="url(#nm)" transform="translate(0,-0.5)"/></svg></span><u>N</u>ew Menu</div>
<div class="btn big" style="left:555px;top:96px;width:110px;height:26px;padding-left:1px"><span class="bi"><svg width="16" height="20"><g transform="translate(0.6,0)"><path d="M6 5.5h4.4v4h4v4.4h-4v4h-4.4v-4h-4v-4.4h4z" fill="#3c3c3c" stroke="#1a1a1a" stroke-width="1"/></g><path d="M6.5 6h3.4v4h4v1" fill="none" stroke="#555" stroke-width=".8"/></svg></span>Ne<u>w</u> Item</div>
<div class="btn big dis" style="left:554px;top:131px;width:112px;height:28px;letter-spacing:-0.25px">New <u>S</u>eparator</div>
<div class="btn big dis" style="left:554px;top:179px;width:114px;height:28px"><span class="bi"><svg width="16" height="22"><defs><pattern id="dz" width="2" height="2" patternUnits="userSpaceOnUse"><rect width="2" height="2" fill="#2a2a2a"/><rect width="1" height="1" fill="#f4f4f4"/><rect x="1" y="1" width="1" height="1" fill="#f4f4f4"/></pattern><linearGradient id="fu" x1="0" y1="0" x2="0" y2="1"><stop offset="0" stop-color="#262626" stop-opacity="0"/><stop offset="1" stop-color="#262626" stop-opacity=".55"/></linearGradient><linearGradient id="fd" x1="0" y1="1" x2="0" y2="0"><stop offset="0" stop-color="#262626" stop-opacity="0"/><stop offset="1" stop-color="#262626" stop-opacity=".6"/></linearGradient></defs><path d="M8.5 3 L16 13.5 H12.2 V23 H4.6 V13.5 H1Z" fill="url(#dz)"/><path d="M8.5 3 L16 13.5 H12.2 V23 H4.6 V13.5 H1Z" fill="url(#fu)"/></svg></span>Move Up</div>
<div class="btn big dis" style="left:554px;top:215px;width:114px;height:28px"><span class="bi"><svg width="16" height="22"><path d="M4.4 3 H12.4 V13 H15.6 L8.4 22.5 L1 13 H4.4Z" fill="url(#dz)"/><path d="M4.4 3 H12.4 V13 H15.6 L8.4 22.5 L1 13 H4.4Z" fill="url(#fd)"/></svg></span>Move Down</div>
<div class="btn" style="left:570px;top:264px;width:81px;height:23px"><u>P</u>roperties</div>
<div class="btn" style="left:570px;top:297px;width:81px;height:23px"><u>D</u>elete</div>
<div class="btn" style="left:20px;top:516px;width:81px;height:23px"><u>H</u>elp</div>
<div class="btn" style="left:496px;top:516px;width:81px;height:23px"><u>R</u>evert</div>
<div class="btn" style="left:586px;top:516px;width:81px;height:23px"><u>C</u>lose</div>
<svg id="cursor" width="16" height="22" viewBox="0 0 16 22"><path d="M3 2.2 L3 19 L7 15.4 L9.6 20.8 L11.8 19.8 L9.4 14.6 L14.6 14.2 Z" fill="#fff" stroke="#000" stroke-width="1.1" stroke-linejoin="round"/></svg>
<div id="panel"></div>
<div class="tb" style="left:0;width:170px;letter-spacing:-0.13px;background:linear-gradient(#000 0,#000 1px,#525252 1px,#2a2a2a 50%,#050505 90%);border-right:1px solid #555;padding-left:5px">Forum Sveta kompjut...</div>
<div class="tb" style="left:176px;width:196px;background:linear-gradient(#000 0,#000 1px,#161616 1px,#131313 11.5px,#000 12px);padding-left:32px">Main Menu<svg style="position:absolute;left:8px;top:5px" width="15" height="12" viewBox="0 0 15 12"><rect x="1" y="0" width="5" height="1" fill="#444"/><rect x="0" y="1.5" width="14" height="11" fill="#e4e4e4"/><rect x="2" y="3" width="3" height="1" fill="#888"/><rect x="2" y="6" width="3" height="1" fill="#999"/><rect x="2" y="8.5" width="3" height="1.3" fill="#333"/></svg></div>
</div>
</body></html>
